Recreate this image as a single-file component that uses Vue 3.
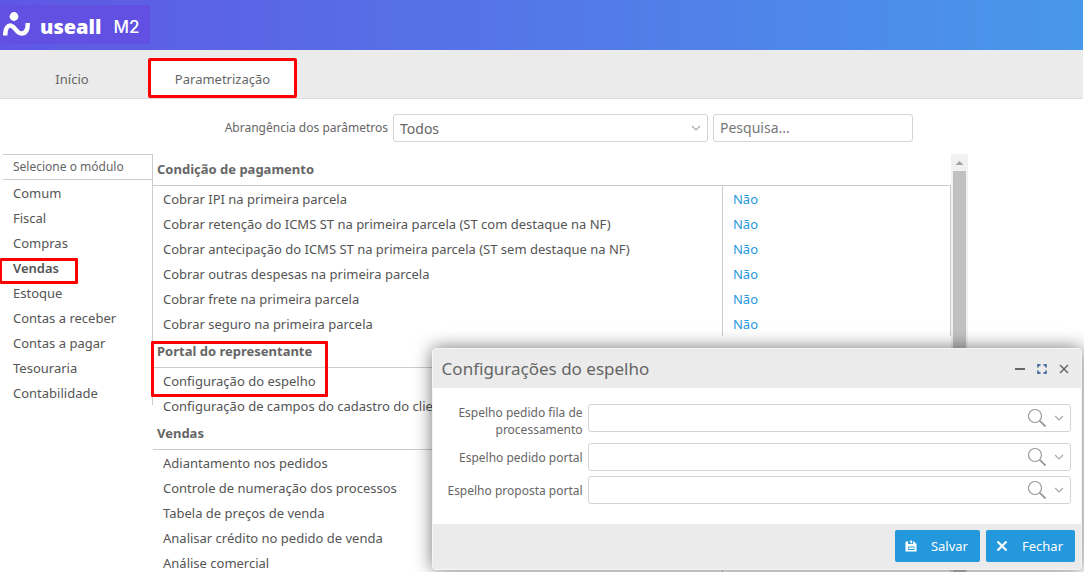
<script setup>
import { ref } from 'vue'

const modules = [
  'Comum', 'Fiscal', 'Compras', 'Vendas', 'Estoque',
  'Contas a receber', 'Contas a pagar', 'Tesouraria', 'Contabilidade',
]
const activeModule = ref('Vendas')

const sections = [
  {
    title: 'Condição de pagamento',
    rows: [
      { label: 'Cobrar IPI na primeira parcela', value: 'Não' },
      { label: 'Cobrar retenção do ICMS ST na primeira parcela (ST com destaque na NF)', value: 'Não' },
      { label: 'Cobrar antecipação do ICMS ST na primeira parcela (ST sem destaque na NF)', value: 'Não' },
      { label: 'Cobrar outras despesas na primeira parcela', value: 'Não' },
      { label: 'Cobrar frete na primeira parcela', value: 'Não' },
      { label: 'Cobrar seguro na primeira parcela', value: 'Não' },
    ],
  },
  {
    title: 'Portal do representante',
    marked: true,
    rows: [
      { label: 'Configuração do espelho' },
      { label: 'Configuração de campos do cadastro do cliente' },
    ],
  },
  {
    title: 'Vendas',
    rows: [
      { label: 'Adiantamento nos pedidos' },
      { label: 'Controle de numeração dos processos' },
      { label: 'Tabela de preços de venda' },
      { label: 'Analisar crédito no pedido de venda' },
      { label: 'Análise comercial' },
    ],
  },
]

const fields = [
  { id: 'fila', label: 'Espelho pedido fila de processamento' },
  { id: 'pedido', label: 'Espelho pedido portal' },
  { id: 'proposta', label: 'Espelho proposta portal' },
]
</script>

<template>
  <div class="app">
    <header class="topbar">
      <div class="brand">
        <svg class="brand-mark" viewBox="0 0 28 26" aria-hidden="true">
          <circle cx="11" cy="4.500" r="4.400" fill="#fff" />
          <path d="M2.200 23.500C2.200 15.500 5.200 12.800 8.500 13.800C12.500 15 13.500 21.500 18.500 21.500C23 21.500 24.800 18 24.800 11" fill="none" stroke="#fff" stroke-width="4.400" />
        </svg>
        <span class="brand-name">useall</span>
        <span class="brand-version">M2</span>
      </div>
    </header>

    <nav class="tabs">
      <button type="button" class="tab">Início</button>
      <button type="button" class="tab active">Parametrização</button>
    </nav>

    <div class="filters">
      <label for="scope">Abrangência dos parâmetros</label>
      <div class="select-wrap">
        <select id="scope"><option>Todos</option></select>
        <svg class="chevron" viewBox="0 0 10 6" aria-hidden="true"><path d="M1 1L5 5L9 1" /></svg>
      </div>
      <input class="search" type="text" placeholder="Pesquisa..." aria-label="Pesquisa">
    </div>

    <div class="workspace">
      <aside class="modules">
        <h2>Selecione o módulo</h2>
        <ul>
          <li v-for="m in modules" :key="m">
            <button type="button" :class="{ current: m === activeModule }" @click="activeModule = m">{{ m }}</button>
          </li>
        </ul>
      </aside>

      <main class="params">
        <table>
          <colgroup><col><col class="value-col"></colgroup>
          <tbody v-for="s in sections" :key="s.title">
            <tr class="title">
              <th colspan="2" scope="rowgroup"><span v-if="s.marked" class="mark"></span>{{ s.title }}</th>
            </tr>
            <tr v-for="r in s.rows" :key="r.label">
              <td>{{ r.label }}</td>
              <td class="value"><a v-if="r.value" href="#">{{ r.value }}</a></td>
            </tr>
          </tbody>
        </table>
      </main>

      <div class="scrollbar" aria-hidden="true">
        <div class="arrow"></div>
        <div class="thumb"></div>
      </div>

      <section class="dialog" role="dialog" aria-labelledby="dialog-title">
        <div class="dialog-head">
          <h1 id="dialog-title">Configurações do espelho</h1>
          <button type="button" aria-label="Minimizar">
            <svg viewBox="0 0 12 12"><path d="M1 6H11" stroke-width="2" /></svg>
          </button>
          <button type="button" aria-label="Maximizar">
            <svg class="max" viewBox="0 0 12 12"><path d="M2 4.500V2H4.500M7.500 2H10V4.500M10 7.500V10H7.500M4.500 10H2V7.500" stroke-width="1.800" /></svg>
          </button>
          <button type="button" aria-label="Fechar janela">
            <svg viewBox="0 0 12 12"><path d="M2 2L10 10M10 2L2 10" stroke-width="1.500" /></svg>
          </button>
        </div>
        <div class="dialog-body">
          <div v-for="f in fields" :key="f.id" class="field">
            <label :for="f.id">{{ f.label }}</label>
            <div class="lookup">
              <input :id="f.id" type="text">
              <button type="button" aria-label="Pesquisar">
                <svg class="lens" viewBox="0 0 20 20"><circle cx="8" cy="8" r="6.500" /><path d="M12.800 12.800L18.500 18.500" stroke-width="1.800" /></svg>
              </button>
              <button type="button" aria-label="Abrir lista">
                <svg class="chevron" viewBox="0 0 10 6"><path d="M1 1L5 5L9 1" /></svg>
              </button>
            </div>
          </div>
        </div>
        <div class="dialog-foot">
          <button type="button">
            <svg viewBox="0 0 12 12" aria-hidden="true">
              <path d="M0.500 1.500H9L11.500 4V11.500H0.500Z" fill="#fff" />
              <path d="M3 1.500H8V4H3ZM3 6.500H9.500V10H3Z" fill="#2498dc" />
              <path d="M5.500 0.500H7V3.200H5.500ZM3.500 7.500H9V9H3.500Z" fill="#fff" />
            </svg>
            Salvar
          </button>
          <button type="button">
            <svg viewBox="0 0 12 12" aria-hidden="true"><path d="M1.500 1.500L10.500 10.500M10.500 1.500L1.500 10.500" stroke="#fff" stroke-width="2.200" /></svg>
            Fechar
          </button>
        </div>
      </section>
    </div>
  </div>
</template>

<style>
body {
  background: #fff;
}
</style>

<style scoped>
.app {
  display: flex;
  flex-direction: column;
  box-sizing: border-box;
  height: 100vh;
  padding-bottom: 2px;
  overflow: hidden;
  font: 13px/25px "Noto Sans", "Open Sans", sans-serif;
  color: #555;
}
button,
input,
select {
  font: inherit;
  color: inherit;
  margin: 0;
}
button {
  border: 0;
  padding: 0;
  background: none;
}

.topbar {
  flex: none;
  height: 50px;
  margin-right: 1px;
  padding-top: 5px;
  box-sizing: border-box;
  background: linear-gradient(90deg, #5f57e4, #4898eb);
}
.brand {
  display: flex;
  align-items: center;
  width: 150px;
  height: 39px;
  background: #6150e2;
  color: #fff;
}
.brand-mark {
  width: 28px;
  height: 26px;
  margin-left: 3px;
}
.brand-name,
.brand-version {
  padding-top: 4px;
}
.brand-name {
  margin-left: 9px;
  font: 800 20px/24px "Open Sans", sans-serif;
}
.brand-version {
  margin-left: 12px;
  font: 500 17px/24px Inter, sans-serif;
}

.tabs {
  flex: none;
  display: flex;
  box-sizing: border-box;
  height: 49px;
  margin-right: 1px;
  padding-top: 8px;
  border-bottom: 1px solid #ddd;
  background: #ebebeb;
  color: #666;
}
.tab {
  width: 144px;
  padding-top: 2px;
}
.tab.active {
  width: 149px;
  margin-left: 4px;
  border: 3px solid #f00;
  border-radius: 2px;
  background: #fff;
}

.filters {
  flex: none;
  display: flex;
  justify-content: flex-end;
  gap: 5px;
  padding: 15px 171px 12px 0;
  font-size: 12px;
  line-height: 28px;
  color: #666;
}
.select-wrap {
  position: relative;
  width: 315px;
}
.filters select,
.search,
.lookup {
  box-sizing: border-box;
  height: 28px;
  border: 1px solid #d4d4d4;
  border-radius: 3px;
  background: #fff;
}
.filters select,
.search {
  display: block;
  width: 100%;
  padding: 0 6px;
  appearance: none;
  font-size: 14px;
}
.search {
  width: 200px;
}
.search::placeholder {
  color: #777;
}
.chevron {
  width: 10px;
  height: 6px;
  fill: none;
  stroke: #aaa;
  stroke-width: 1.2;
}
.select-wrap .chevron {
  position: absolute;
  right: 7px;
  top: 11px;
}

.workspace {
  position: relative;
  flex: 1;
  min-height: 0;
  display: flex;
  align-items: flex-start;
  overflow: hidden;
}
.modules {
  flex: none;
  box-sizing: border-box;
  width: 150px;
  margin-left: 3px;
  border-top: 1px solid #ccc;
  border-right: 1px solid #ccc;
}
.modules h2 {
  margin: 0;
  padding-left: 10px;
  border-bottom: 1px solid #ccc;
  font-size: 12px;
  line-height: 24px;
  font-weight: 400;
  color: #666;
}
.modules ul {
  margin: 0;
  padding: 0;
  list-style: none;
}
.modules button {
  position: relative;
  display: block;
  width: 100%;
  height: 25px;
  padding: 2px 0 0 10px;
  line-height: 23px;
  text-align: left;
}
.modules .current {
  font-weight: 600;
}
.current::before {
  content: "";
  position: absolute;
  left: -3px;
  top: 3px;
  width: 73px;
  height: 20px;
  border: 3px solid #f00;
  border-left-width: 2px;
  border-radius: 1px;
}

.params {
  flex: 1;
}
table {
  width: 100%;
  border-collapse: collapse;
  table-layout: fixed;
}
.value-col {
  width: 228px;
}
th {
  position: relative;
  height: 31px;
  padding: 0 4px;
  border-bottom: 1px solid #ccc;
  text-align: left;
  font-weight: 700;
  color: #666;
}
td {
  height: 23px;
  padding: 2px 10px 0;
  line-height: 23px;
  white-space: nowrap;
}
.value {
  border-left: 1px solid #ccc;
  border-right: 1px solid #ccc;
}
.value a {
  color: #2498dc;
  text-decoration: none;
}
.mark {
  position: absolute;
  left: -2px;
  top: 5px;
  width: 171px;
  height: 50px;
  border: 3px solid #f00;
  border-radius: 1px;
}

.scrollbar {
  flex: none;
  align-self: stretch;
  display: flex;
  flex-direction: column;
  width: 17px;
  margin-right: 116px;
  background: #f1f1f1;
}
.arrow {
  width: 8px;
  height: 4px;
  margin: 7px auto 6px;
  background: #a3a3a3;
  clip-path: polygon(50% 0, 100% 100%, 0 100%);
}
.thumb {
  flex: 1;
  margin: 0 2px;
  background: #c1c1c1;
}

.dialog {
  position: absolute;
  right: 2px;
  bottom: 2px;
  width: 60%;
  box-sizing: border-box;
  border: 1px solid #f5f5f5;
  border-radius: 4px;
  background: #fff;
  box-shadow: 0 0 18px rgba(0, 0, 0, 0.55);
  color: #666;
}
.dialog-head {
  display: flex;
  align-items: center;
  gap: 10px;
  height: 39px;
  padding: 0 11px 0 9px;
  border-radius: 3px 3px 0 0;
  background: #ebebeb;
}
.dialog-head h1 {
  flex: 1;
  margin: 0;
  font-size: 17px;
  font-weight: 400;
}
.dialog-head svg {
  display: block;
  width: 12px;
  height: 12px;
  fill: none;
  stroke: #666;
}
.dialog-head .max {
  stroke: #50749f;
}
.dialog-body {
  display: flex;
  flex-direction: column;
  gap: 5px;
  padding: 16px 10px 20px;
}
.field {
  display: flex;
  align-items: flex-start;
  gap: 5px;
}
.field label {
  width: 140px;
  padding-top: 6px;
  text-align: right;
  font-size: 12px;
  line-height: 17px;
}
.field:first-child label {
  padding-top: 0;
}
.lookup {
  flex: 1;
  display: flex;
  align-items: center;
  gap: 7px;
  padding-right: 6px;
}
.lookup input {
  flex: 1;
  min-width: 0;
  border: 0;
  outline: 0;
  background: none;
}
.lookup button {
  display: flex;
}
.lens {
  width: 20px;
  height: 20px;
  fill: none;
  stroke: #999;
  stroke-width: 1.2;
}
.dialog-foot {
  display: flex;
  justify-content: flex-end;
  gap: 6px;
  padding: 6px 6px 7px;
  border-radius: 0 0 3px 3px;
  background: #ebebeb;
}
.dialog-foot button {
  display: flex;
  align-items: center;
  gap: 14px;
  height: 32px;
  padding: 0 12px 0 10px;
  border-radius: 2px;
  background: #2498dc;
  color: #fff;
}
.dialog-foot svg {
  width: 12px;
  height: 12px;
}
</style>
